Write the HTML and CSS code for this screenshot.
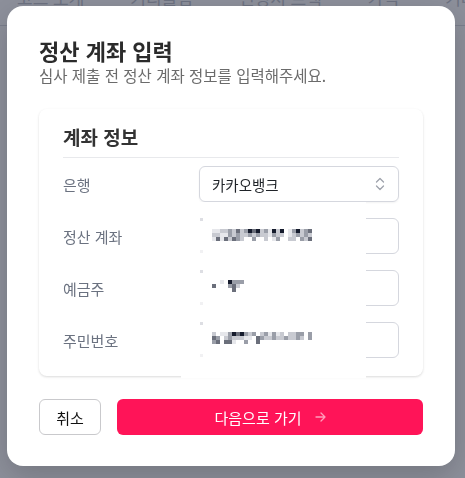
FILE: index.html
```html
<!DOCTYPE html>
<html lang="ko">
<head>
    <meta charset="UTF-8">
    <meta name="viewport" content="width=device-width, initial-scale=1.0">
    <title>정산 계좌 입력</title>
    <link rel="stylesheet" href="styles.css">
</head>
<body>
    <header class="site-nav">
        <span>코스 소개</span>
        <span>커리큘럼</span>
        <span>신청서 트랙</span>
        <span>가격</span>
        <span>기타 설정</span>
    </header>

    <div class="backdrop">
        <div class="modal">
            <h2 class="modal-title">정산 계좌 입력</h2>
            <p class="modal-desc">심사 제출 전 정산 계좌 정보를 입력해주세요.</p>

            <section class="account-card">
                <h3 class="card-title">계좌 정보</h3>
                <div class="field-list">
                    <div class="field">
                        <label>은행</label>
                        <div class="select-box">
                            <span>카카오뱅크</span>
                            <svg class="chevrons" width="10" height="14" viewBox="0 0 10 14">
                                <path d="M1.5 5 L5 1.5 L8.5 5 M1.5 9 L5 12.5 L8.5 9" fill="none" stroke="#9ea2ab" stroke-width="1.3" stroke-linecap="round" stroke-linejoin="round"/>
                            </svg>
                        </div>
                    </div>
                    <div class="field">
                        <label>정산 계좌</label>
                        <div class="text-input"></div>
                    </div>
                    <div class="field">
                        <label>예금주</label>
                        <div class="text-input"></div>
                    </div>
                    <div class="field">
                        <label>주민번호</label>
                        <div class="text-input"></div>
                    </div>
                </div>

                <!-- masked personal info -->
                <div class="redacted">
                    <svg id="mosaic" width="185" height="175" viewBox="0 0 185 175"></svg>
                </div>
            </section>

            <div class="modal-actions">
                <button class="btn-cancel">취소</button>
                <button class="btn-next">
                    다음으로 가기
                    <svg class="arrow" width="11" height="10" viewBox="0 0 11 10">
                        <path d="M1 5 H10 M6 1 L10 5 L6 9" fill="none" stroke="#ff9dbb" stroke-width="1.3" stroke-linecap="round" stroke-linejoin="round"/>
                    </svg>
                </button>
            </div>
        </div>
    </div>

    <script>
        // mosaic blocks over the masked values
        const palette = { a: '#e6e7eb', b: '#c8cad1', c: '#9a9ea8', d: '#6b6f7b', e: '#151b2c' };
        const blocks = [
            { x: 31, y: 27, rows: ['aabbcbdbcedebcaebe.acebcd', 'bbaacbcbbcbcbbacbb.abcbcb', 'adadbdcb..c..b.ac..bb.cbd'] },
            { x: 31, y: 78, rows: ['..a.eccc.', 'd...cdb..', '.....d...'] },
            { x: 31, y: 130, rows: ['b.aacedecbc.bcacab.bbcc.c', 'dc.bcbbbaa.dcbbcbbcbbcb.c', 'cd.dda..c..d.............'] }
        ];
        const dots = [[19, 16, '#dddee3'], [19, 48, '#f1f1f3'], [19, 68, '#dddee3'], [19, 100, '#f1f1f3'], [19, 120, '#dddee3'], [19, 152, '#f1f1f3']];
        const svg = document.getElementById('mosaic');
        let out = '';

        dots.forEach(([x, y, fill]) => {
            out += `<rect x="${x}" y="${y}" width="3" height="3" fill="${fill}"/>`;
        });
        blocks.forEach(block => {
            block.rows.forEach((row, r) => {
                [...row].forEach((ch, i) => {
                    if (palette[ch]) {
                        out += `<rect x="${block.x + i * 4}" y="${block.y + r * 4}" width="4" height="4" fill="${palette[ch]}"/>`;
                    }
                });
            });
        });
        svg.innerHTML = out;
    </script>
</body>
</html>
```

FILE: styles.css
```css
body {
    margin: 0;
    font-family: "Noto Sans CJK KR", "Noto Sans", sans-serif;
    background-color: #fff;
}

.site-nav {
    display: flex;
    gap: 46px;
    height: 25px;
    padding-left: 17px;
    border-bottom: 1px solid #d9dce2;
    overflow: hidden;
}
.site-nav span {
    margin-top: -13px;
    font-size: 17px;
    line-height: 22px;
    color: #c0c4cc;
    white-space: nowrap;
}

.backdrop {
    position: fixed;
    inset: 0;
    padding: 6px 0 0 7px;
    background-color: rgba(27, 33, 55, 0.5);
}

.modal {
    width: 448px;
    height: 460px;
    box-sizing: border-box;
    padding: 32px;
    background-color: #fff;
    border-radius: 16px;
    box-shadow: 0 10px 30px rgba(0,0,0,0.18);
}
.modal-title {
    margin: 0;
    font-size: 22px;
    font-weight: 700;
    line-height: 24px;
    color: #2b2b2b;
}
.modal-desc {
    margin: 3px 0 0;
    font-size: 15.5px;
    line-height: 20px;
    color: #6b6b6b;
}

.account-card {
    position: relative;
    margin-top: 24px;
    padding: 16px 24px 18px;
    border-radius: 8px;
    box-shadow: 0 1px 3px rgba(0,0,0,0.1), 0 1px 2px rgba(0,0,0,0.05);
}
.card-title {
    margin: 0 0 8px;
    padding-bottom: 8px;
    border-bottom: 1px solid #e8e9ec;
    font-size: 19px;
    font-weight: 700;
    line-height: 24px;
    color: #333;
}
.field-list {
    display: flex;
    flex-direction: column;
    gap: 16px;
}
.field {
    display: grid;
    grid-template-columns: 136px 1fr;
    align-items: center;
}
.field label {
    font-size: 15px;
    color: #6b7280;
}
.select-box,
.text-input {
    height: 36px;
    box-sizing: border-box;
    border: 1px solid #d5d7de;
    border-radius: 6px;
}
.select-box {
    display: flex;
    align-items: center;
    justify-content: space-between;
    padding: 0 13px 0 12px;
    font-size: 14.5px;
    color: #1f2328;
    box-shadow: 0 1px 2px rgba(0,0,0,0.05);
}
.redacted {
    position: absolute;
    left: 142px;
    top: 93px;
    width: 185px;
    height: 176px;
    background-color: #fff;
}
.redacted svg {
    display: block;
}

.modal-actions {
    display: flex;
    gap: 16px;
    margin-top: 23px;
}
.btn-cancel {
    width: 62px;
    height: 36px;
    border: 1px solid #c9c9cc;
    border-radius: 6px;
    background-color: #fff;
    font-family: inherit;
    font-size: 15px;
    color: #111;
    cursor: pointer;
}
.btn-next {
    flex: 1;
    display: flex;
    align-items: center;
    justify-content: center;
    gap: 13px;
    height: 36px;
    border: none;
    border-radius: 6px;
    background-color: #ff1458;
    font-family: inherit;
    font-size: 15px;
    color: #fff;
    cursor: pointer;
}
```
